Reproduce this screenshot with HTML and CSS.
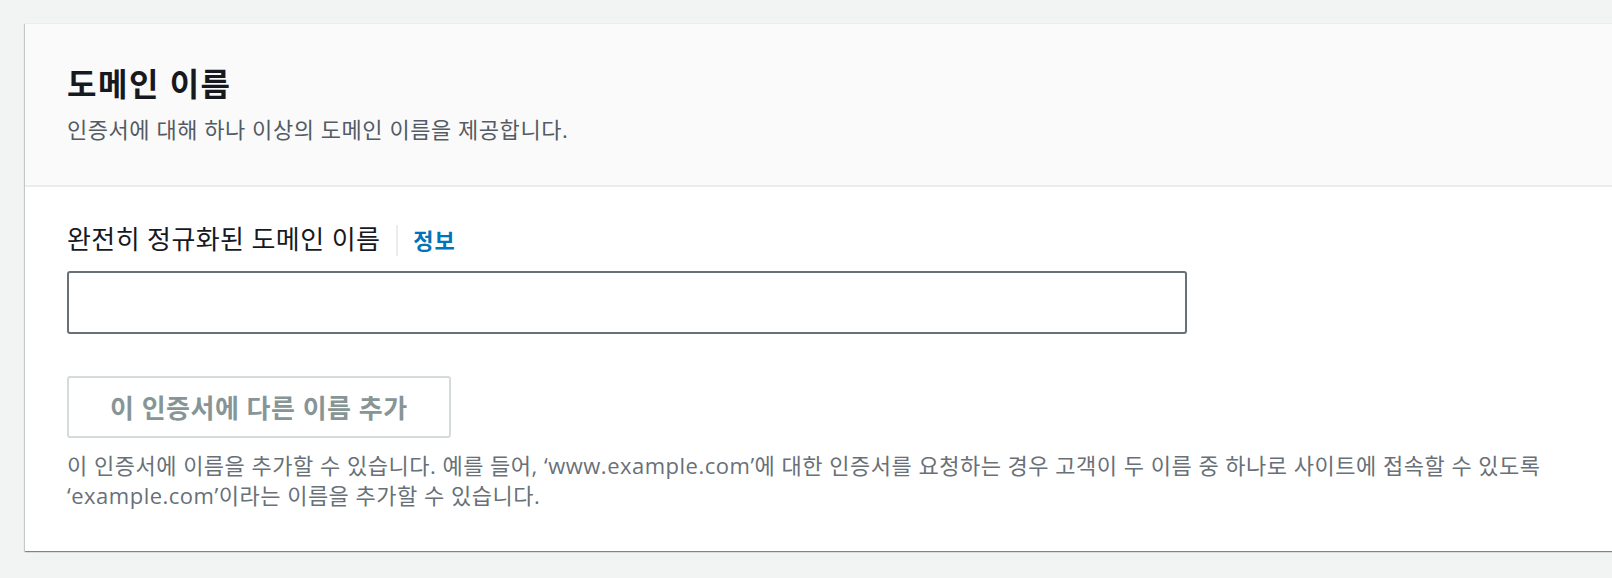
FILE: index.html
```html
<!DOCTYPE html>
<html lang="ko">
<head>
<meta charset="utf-8">
<title>도메인 이름</title>
<link rel="stylesheet" href="styles.css">
</head>
<body>
  <section class="card">
    <header class="card-header">
      <h2 class="card-title">도메인 이름</h2>
      <p class="card-desc">인증서에 대해 하나 이상의 도메인 이름을 제공합니다.</p>
    </header>
    <div class="card-body">
      <div class="field-label">
        <label class="label-text" for="fqdn">완전히 정규화된 도메인 이름</label>
        <a class="info-link" href="#">정보</a>
      </div>
      <input class="text-input" id="fqdn" type="text">
      <button class="btn-add" type="button" disabled>이 인증서에 다른 이름 추가</button>
      <p class="help-text">이 인증서에 이름을 추가할 수 있습니다. 예를 들어, ‘www.example.com’에 대한 인증서를 요청하는 경우 고객이 두 이름 중 하나로 사이트에 접속할 수 있도록 ‘example.com’이라는 이름을 추가할 수 있습니다.</p>
    </div>
  </section>
</body>
</html>
```
FILE: styles.css
```css
html, body {
  margin: 0;
  padding: 0;
  overflow: hidden;
}
body {
  background: #f2f3f3;
  font-family: "Open Sans", "Noto Sans CJK KR", sans-serif;
  color: #16191f;
  padding: 23px 0 0 25px;
  min-height: 578px;
  box-sizing: border-box;
}
.card {
  margin-right: -20px;
  background: #ffffff;
  border-top: 1px solid #eaeded;
  box-shadow: 0 1px 1px 0 rgba(0, 28, 36, 0.3),
              1px 1px 1px 0 rgba(0, 28, 36, 0.15),
              -1px 1px 1px 0 rgba(0, 28, 36, 0.15);
}
.card-header {
  background: #fafafa;
  border-bottom: 2px solid #eaeded;
  padding: 39px 42px 41px;
}
.card-title {
  margin: 0;
  font-size: 32px;
  line-height: 42px;
  letter-spacing: 1.5px;
  font-weight: 700;
  color: #16191f;
}
.card-desc {
  margin: 9px 0 0;
  font-size: 22px;
  line-height: 30px;
  letter-spacing: 0.55px;
  color: #545b64;
}
.card-body {
  padding: 34px 42px 41px;
  display: flex;
  flex-direction: column;
  align-items: flex-start;
}
.field-label {
  display: flex;
  align-items: baseline;
  font-size: 26px;
  line-height: 36px;
  letter-spacing: 0.4px;
}
.label-text {
  color: #16191f;
}
.info-link {
  margin-left: 16px;
  padding-left: 15px;
  border-left: 2px solid #eaeded;
  font-size: 22px;
  line-height: 31px;
  letter-spacing: 1px;
  font-weight: 700;
  color: #0073bb;
  text-decoration: none;
}
.text-input {
  margin-top: 14px;
  width: 1120px;
  height: 63px;
  box-sizing: border-box;
  border: 2px solid #687078;
  border-radius: 3px;
  background: #ffffff;
  font: inherit;
  font-size: 21px;
  padding: 0 15px;
  outline: none;
}
.btn-add {
  margin-top: 42px;
  height: 62px;
  box-sizing: border-box;
  padding: 0 41px;
  border: 2px solid #d5dbdb;
  border-radius: 3px;
  background: #ffffff;
  font-family: inherit;
  font-size: 26px;
  letter-spacing: 0.5px;
  font-weight: 700;
  color: #879596;
}
.help-text {
  margin: 12px 0 0;
  font-size: 22px;
  line-height: 30px;
  letter-spacing: 0.5px;
  color: #687078;
}
```
